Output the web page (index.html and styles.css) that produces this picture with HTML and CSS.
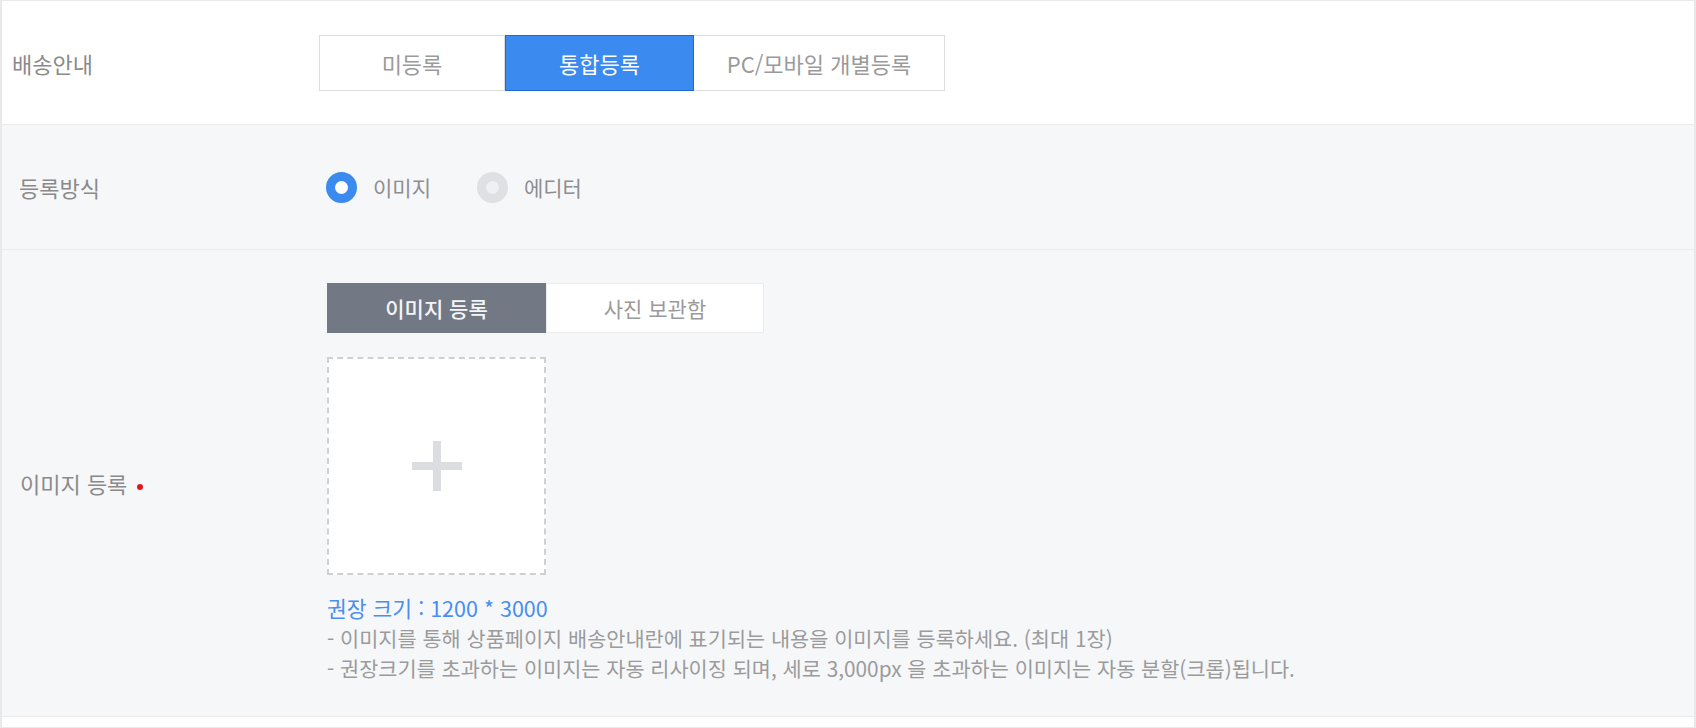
FILE: index.html
```html
<!DOCTYPE html>
<html lang="ko">
<head>
<meta charset="utf-8">
<link rel="stylesheet" href="styles.css">
</head>
<body>
<div class="form">
  <div class="row row-white row-first">
    <div class="label">배송안내</div>
    <div class="content">
      <div class="seg">
        <button class="seg-btn w1">미등록</button>
        <button class="seg-btn w2 active">통합등록</button>
        <button class="seg-btn w3">PC/모바일 개별등록</button>
      </div>
    </div>
  </div>
  <div class="row row-gray row-second">
    <div class="label">등록방식</div>
    <div class="content radios">
      <label class="radio"><span class="dot on"></span><span class="rtext">이미지</span></label>
      <label class="radio"><span class="dot off"></span><span class="rtext">에디터</span></label>
    </div>
  </div>
  <div class="row row-gray row-third">
    <div class="label">이미지 등록 <span class="req"></span></div>
    <div class="content stack">
      <div class="tabs">
        <div class="tab tab-on">이미지 등록</div>
        <div class="tab tab-off">사진 보관함</div>
      </div>
      <div class="upload"><span class="plus"></span></div>
      <div class="notes">
        <p class="note-blue">권장 크기 : 1200 * 3000</p>
        <p class="note">- 이미지를 통해 상품페이지 배송안내란에 표기되는 내용을 이미지를 등록하세요. (최대 1장)</p>
        <p class="note">- 권장크기를 초과하는 이미지는 자동 리사이징 되며, 세로 3,000px 을 초과하는 이미지는 자동 분할(크롭)됩니다.</p>
      </div>
    </div>
  </div>
  <div class="row row-white row-tail"></div>
</div>
</body>
</html>
```

FILE: styles.css
```css
* { box-sizing: border-box; }
html, body { margin: 0; padding: 0; background: #ffffff; }
body {
  font-family: "Noto Sans CJK KR", "Noto Sans", sans-serif;
  font-size: 20px;
  color: #8b8b8b;
}
.form {
  width: 1696px;
  border: 1px solid #e9e9e9;
  border-width: 1px 2px 1px 2px;
  height: 728px;
  overflow: hidden;
}
.row {
  display: grid;
  grid-template-columns: 307px 1fr;
  align-items: center;
  border-bottom: 1px solid #ebebeb;
}
.row-white { background: #ffffff; }
.row-gray { background: #f6f7f9; }
.row-first { height: 124px; padding-left: 10px; }
.row-second { height: 125px; padding-left: 17px; }
.row-third { height: 467px; padding-left: 18px; }
.row-tail { height: 10px; border-bottom: none; }
.label { font-size: 22px; line-height: 1; white-space: nowrap; color: #8a8a8a; }
.req {
  display: inline-block;
  width: 6px; height: 6px;
  border-radius: 50%;
  background: #e3141d;
  vertical-align: middle;
  margin-left: 3px;
}
.seg { display: flex; }
.seg-btn {
  height: 56px;
  font-family: inherit;
  font-size: 22px;
  color: #9a9a9a;
  background: #fff;
  border: 1px solid #dcdcdc;
  margin: 0;
  padding: 0;
  line-height: 1;
}
.seg-btn + .seg-btn { border-left: none; }
.w1 { width: 186px; }
.w2 { width: 189px; }
.w3 { width: 251px; }
.seg-btn.active {
  background: #3a8aef;
  border: 1px solid #1f6bd1;
  color: #ffffff;
}
.radios { display: flex; align-items: center; }
.radio { display: flex; align-items: center; margin-right: 46px; }
.dot {
  width: 31px; height: 31px;
  border-radius: 50%;
  background: #fff;
}
.dot.on { border: 9px solid #3a8aef; }
.dot.off { border: 9px solid #dfe0e3; background: #eff0f2; }
.rtext { margin-left: 16px; font-size: 21px; color: #8e8e8e; line-height: 1; }
.stack { display: flex; flex-direction: column; align-items: flex-start; }
.tabs { display: flex; }
.tab {
  height: 50px;
  display: flex;
  align-items: center;
  justify-content: center;
  font-size: 21px;
}
.tab-on { width: 219px; background: #727884; color: #f4f5f7; font-weight: 500; }
.tab-off { width: 218px; background: #ffffff; color: #9a9a9a; border: 1px solid #ececec; }
.upload {
  margin-top: 24px;
  width: 219px;
  height: 218px;
  border: 2px dashed #cfd0d2;
  background: #fff;
  display: flex;
  align-items: center;
  justify-content: center;
}
.plus {
  position: relative;
  width: 50px; height: 50px;
}
.plus::before, .plus::after {
  content: "";
  position: absolute;
  background: #dcdde1;
}
.plus::before { left: 0; right: 0; top: 21px; height: 8px; }
.plus::after { top: 0; bottom: 0; left: 21px; width: 8px; }
.notes { margin-top: 18px; }
.notes p { margin: 0; line-height: 30px; white-space: nowrap; }
.note-blue { color: #4a8ef0; font-size: 21.5px; }
.note { color: #9b9b9b; font-size: 20.8px; }
```
